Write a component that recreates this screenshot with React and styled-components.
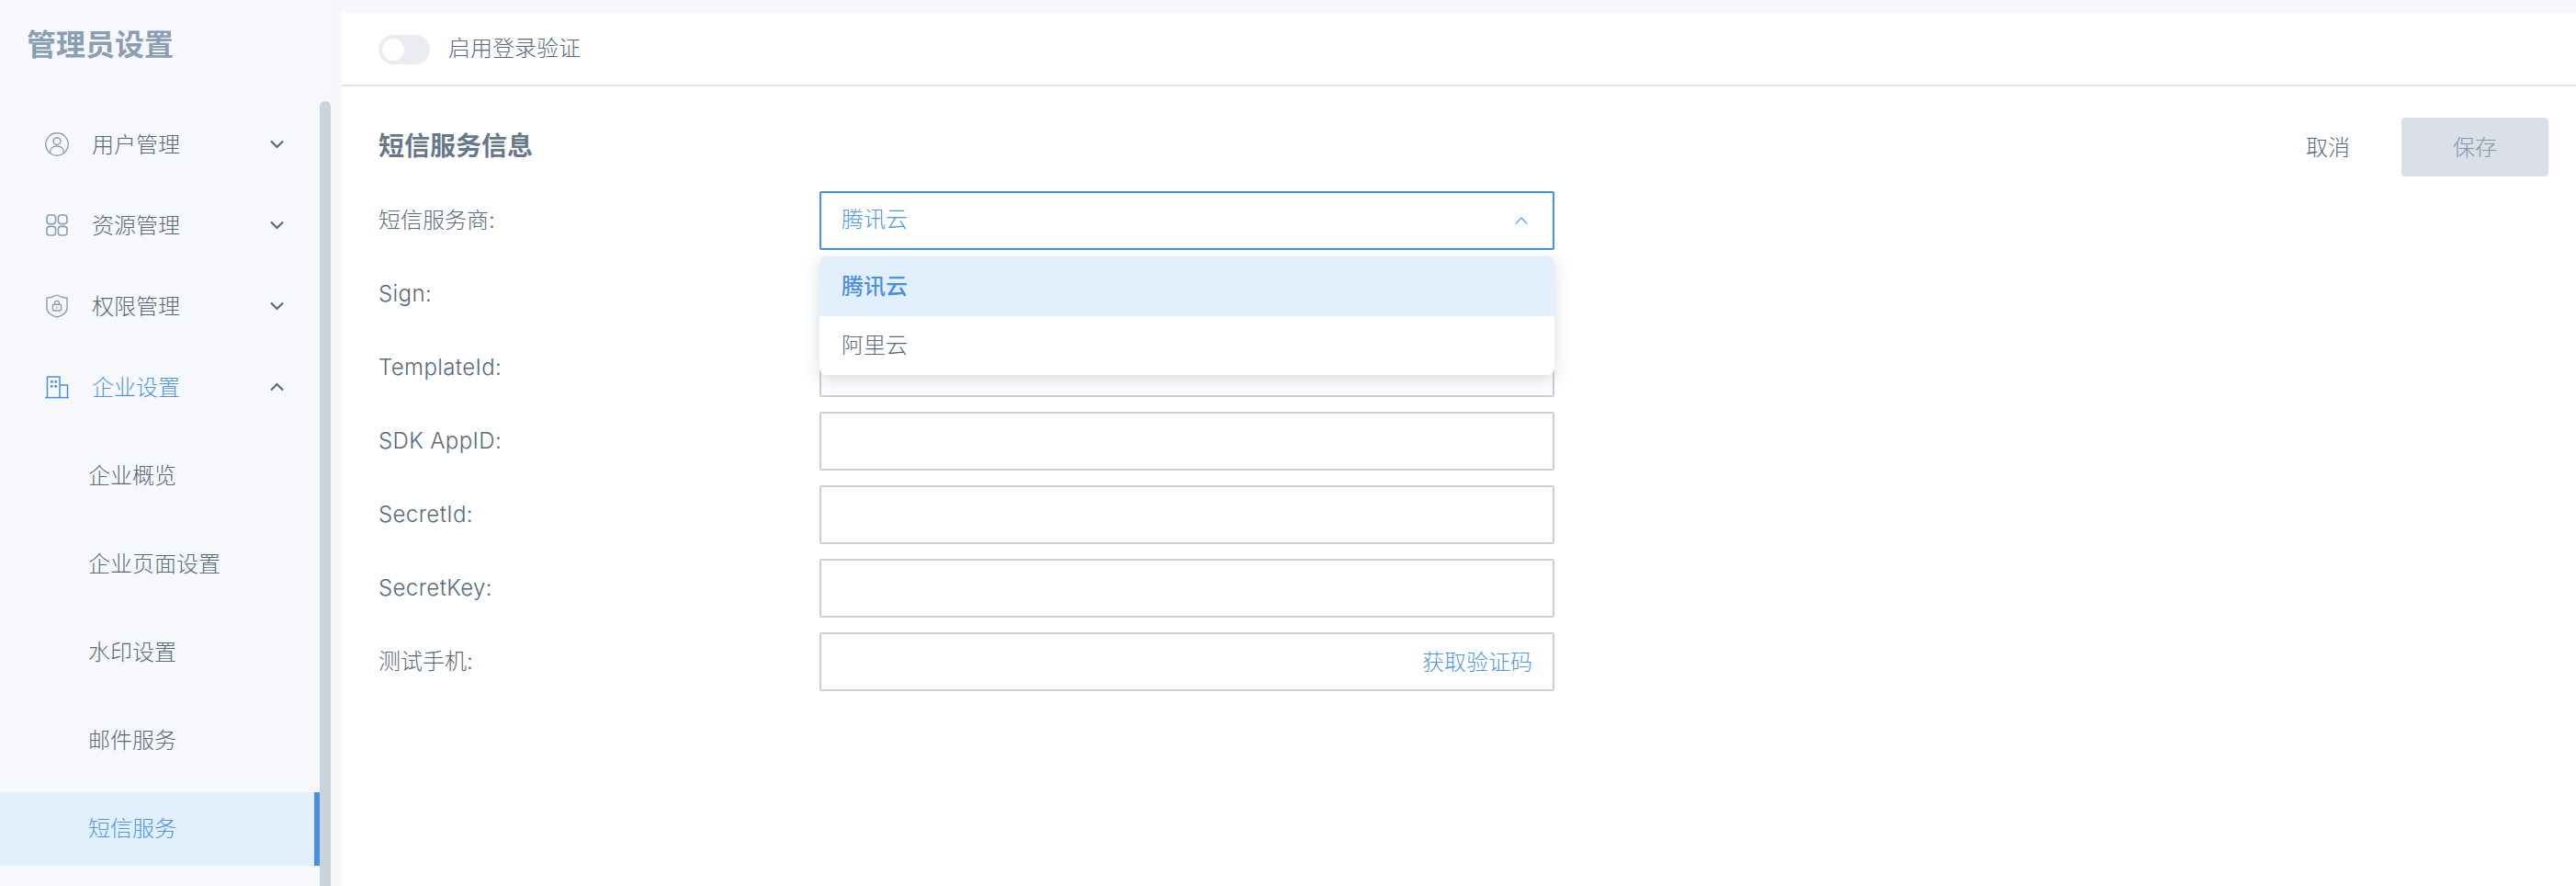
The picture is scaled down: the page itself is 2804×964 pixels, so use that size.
import React from "react";
import styled, { createGlobalStyle } from "styled-components";

const GlobalStyle = createGlobalStyle`
  html, body {
    margin: 0;
    padding: 0;
    height: 100%;
    background: #f5f7fb;
  }
  body {
    font-family: Inter, "Noto Sans CJK SC", "Noto Sans", sans-serif;
    overflow: hidden;
  }
  * {
    box-sizing: border-box;
  }
`;

const Page = styled.div`
  display: flex;
  gap: 12px;
  width: 2804px;
  height: 964px;
  overflow: hidden;
`;

const Sidebar = styled.aside`
  position: relative;
  flex: none;
  width: 360px;
  height: 100%;
  padding-right: 12px;
  background: #f6f8fc;
`;

const Scrollbar = styled.div`
  position: absolute;
  top: 110px;
  right: 0;
  bottom: 0;
  width: 12px;
  border-radius: 6px 6px 0 0;
  background: #cad3dc;
`;

const SideTitle = styled.h1`
  margin: 0 0 17px;
  padding: 2px 0 0 29px;
  font-size: 32px;
  line-height: 94px;
  font-weight: 700;
  color: #8a9eb4;
`;

const MenuItem = styled.div`
  display: flex;
  align-items: center;
  height: 88px;
  padding: 0 39px 0 49px;
  font-size: 24px;
  font-weight: 300;
  color: ${(p) => (p.$active ? "#4f96e6" : "#596a7b")};
`;

const MenuIcon = styled.span`
  display: flex;
  justify-content: center;
  width: 26px;
  margin-right: 25px;
`;

const MenuText = styled.span`
  flex: 1;
  padding-bottom: 4px;
`;

const SubMenu = styled.div`
  display: flex;
  flex-direction: column;
  gap: 16px;
  margin-top: 13px;
`;

const SubItem = styled.div`
  position: relative;
  display: flex;
  align-items: center;
  height: 80px;
  padding: 0 0 6px 96px;
  font-size: 24px;
  font-weight: 300;
  color: ${(p) => (p.$active ? "#4f96e6" : "#596a7b")};
  background: ${(p) => (p.$active ? "#e2f0fe" : "transparent")};
  &::after {
    content: "";
    display: ${(p) => (p.$active ? "block" : "none")};
    position: absolute;
    top: 0;
    right: 0;
    bottom: 0;
    width: 6px;
    background: #4a90e2;
  }
`;

const Main = styled.main`
  flex: 1;
  margin-top: 14px;
  background: #fff;
`;

const TopBar = styled.div`
  display: flex;
  align-items: center;
  gap: 20px;
  padding: 24px 40px 22px;
  border-bottom: 2px solid #dfe3ea;
`;

const Toggle = styled.span`
  display: block;
  width: 56px;
  height: 32px;
  padding: 4px;
  border-radius: 16px;
  background: #e9edf1;
  &::before {
    content: "";
    display: block;
    width: 24px;
    height: 24px;
    border-radius: 50%;
    background: #fff;
  }
`;

const Label = styled.span`
  font-size: 24px;
  font-weight: 300;
  line-height: 32px;
  color: #596a7b;
`;

const TopLabel = styled(Label)`
  line-height: 30px;
  padding-bottom: 2px;
`;

const Content = styled.section`
  padding: 34px 30px 0 40px;
`;

const SectionHead = styled.div`
  display: flex;
  align-items: center;
  height: 64px;
  margin-bottom: 16px;
`;

const SectionTitle = styled.h2`
  flex: 1;
  margin: 0;
  padding-bottom: 6px;
  font-size: 28px;
  font-weight: 700;
  color: #67788a;
`;

const CancelButton = styled.button`
  margin-right: 56px;
  padding: 0 0 3px;
  border: none;
  background: none;
  font: inherit;
  font-size: 24px;
  font-weight: 300;
  color: #596a7b;
`;

const SaveButton = styled.button`
  width: 160px;
  height: 64px;
  padding: 0 0 3px;
  border: none;
  border-radius: 4px;
  background: #dadfe8;
  font: inherit;
  font-size: 24px;
  font-weight: 300;
  color: #8497aa;
`;

const Form = styled.div`
  display: flex;
  flex-direction: column;
  gap: 16px;
`;

const Row = styled.div`
  display: flex;
  align-items: center;
  height: 64px;
`;

const RowLabel = styled(Label)`
  flex: none;
  width: 480px;
  letter-spacing: ${(p) => (p.$latin ? "0.4px" : "0")};
`;

const Field = styled.div`
  position: relative;
  display: flex;
  align-items: center;
  width: 800px;
  height: 64px;
  padding: 0 22px;
  border: 2px solid ${(p) => (p.$focus ? "#4a90e2" : "#c8cedb")};
  border-radius: 2px;
  background: #fff;
  font-size: 24px;
  font-weight: 300;
`;

const FieldInput = styled.input`
  flex: 1;
  min-width: 0;
  height: 100%;
  padding: 0;
  border: none;
  outline: none;
  background: none;
  font: inherit;
`;

const SelectValue = styled.span`
  flex: 1;
  padding-bottom: 8px;
  color: #4f96e6;
`;

const SelectArrow = styled.span`
  display: flex;
  margin-right: 5px;
`;

const SendCode = styled.a`
  padding-bottom: 3px;
  color: #4f96e6;
`;

const Dropdown = styled.ul`
  position: absolute;
  z-index: 2;
  top: 69px;
  left: -2px;
  right: -2px;
  margin: 0;
  padding: 0;
  list-style: none;
  overflow: hidden;
  border-radius: 8px;
  background: #fff;
  box-shadow: 0 6px 18px rgba(40, 60, 90, 0.18);
`;

const Option = styled.li`
  display: flex;
  align-items: center;
  height: 64.5px;
  padding: 0 0 4px 24px;
  font-weight: ${(p) => (p.$selected ? 500 : 300)};
  color: ${(p) => (p.$selected ? "#4a90e2" : "#596a7b")};
  background: ${(p) => (p.$selected ? "#e2f0fe" : "#fff")};
`;

const UserIcon = () => (
  <svg width="26" height="26" viewBox="0 0 26 26" fill="none" stroke="#8a9eb4" strokeWidth="1.4">
    <circle cx="13" cy="13" r="12.2" />
    <circle cx="13" cy="9.6" r="3.9" />
    <path d="M5.6 22.6v-1.4c0-3.6 3-6.2 7.4-6.2s7.4 2.6 7.4 6.2v1.4" />
  </svg>
);

const ResourceIcon = () => (
  <svg width="24" height="24" viewBox="0 0 24 24" fill="none" stroke="#8a9eb4" strokeWidth="1.6">
    <rect x="1" y="1" width="9.6" height="9.6" rx="3" />
    <rect x="13.4" y="1" width="9.6" height="9.6" rx="3" />
    <rect x="1" y="13.4" width="9.6" height="9.6" rx="3" />
    <rect x="13.4" y="13.4" width="9.6" height="9.6" rx="3" />
  </svg>
);

const ShieldIcon = () => (
  <svg width="24" height="26" viewBox="0 0 24 26" fill="none" stroke="#8a9eb4" strokeWidth="1.4">
    <path d="M12 1C9 2.8 5 3.8 1 4.2V15c0 5.2 5.4 8.8 11 10 5.6-1.2 11-4.8 11-10V4.2C19 3.8 15 2.8 12 1z" />
    <rect x="7.4" y="11.2" width="9.2" height="6.8" rx="1.4" />
    <path d="M9.6 11.2V9.8a2.4 2.4 0 0 1 4.8 0v1.4" />
    <path d="M12 13.8v1.6" />
  </svg>
);

const BuildingIcon = () => (
  <svg width="26" height="25" viewBox="0 0 26 25" fill="none" stroke="#4a90e2" strokeWidth="1.5">
    <path d="M2.5 23.5V1h13.5v22.5" />
    <path d="M16 10h8.5v13.5" />
    <path d="M0 23.6h26" />
    <g fill="#4a90e2" stroke="none">
      <rect x="6" y="5" width="2.6" height="2.6" />
      <rect x="10.4" y="5" width="2.6" height="2.6" />
      <rect x="6" y="10" width="2.6" height="2.6" />
      <rect x="10.4" y="10" width="2.6" height="2.6" />
    </g>
  </svg>
);

const Chevron = ({ up }) => (
  <svg width="15" height="10" viewBox="0 0 15 10" fill="none" stroke="#5b6b7b" strokeWidth="2.2">
    <path d={up ? "M1 8.5l6.5-6.5 6.5 6.5" : "M1 1.5l6.5 6.5 6.5-6.5"} />
  </svg>
);

const SmallChevron = () => (
  <svg width="14" height="8" viewBox="0 0 14 8" fill="none" stroke="#5a9ee8" strokeWidth="1.2">
    <path d="M1 7.4l6-6.4 6 6.4" />
  </svg>
);

const menus = [
  { name: "用户管理", icon: <UserIcon /> },
  { name: "资源管理", icon: <ResourceIcon /> },
  { name: "权限管理", icon: <ShieldIcon /> },
  { name: "企业设置", icon: <BuildingIcon />, active: true },
];

const subMenus = ["企业概览", "企业页面设置", "水印设置", "邮件服务", "短信服务"];
const fields = ["Sign:", "TemplateId:", "SDK AppID:", "SecretId:", "SecretKey:"];

const App = () => {
  return (
    <Page>
      <GlobalStyle />
      <Sidebar>
        <SideTitle>管理员设置</SideTitle>
        {menus.map((m) => (
          <MenuItem key={m.name} $active={m.active}>
            <MenuIcon>{m.icon}</MenuIcon>
            <MenuText>{m.name}</MenuText>
            <Chevron up={m.active} />
          </MenuItem>
        ))}
        <SubMenu>
          {subMenus.map((s) => (
            <SubItem key={s} $active={s === "短信服务"}>
              {s}
            </SubItem>
          ))}
        </SubMenu>
        <Scrollbar />
      </Sidebar>
      <Main>
        <TopBar>
          <Toggle />
          <TopLabel>启用登录验证</TopLabel>
        </TopBar>
        <Content>
          <SectionHead>
            <SectionTitle>短信服务信息</SectionTitle>
            <CancelButton>取消</CancelButton>
            <SaveButton>保存</SaveButton>
          </SectionHead>
          <Form>
            <Row>
              <RowLabel>短信服务商:</RowLabel>
              <Field $focus>
                <SelectValue>腾讯云</SelectValue>
                <SelectArrow>
                  <SmallChevron />
                </SelectArrow>
                <Dropdown>
                  <Option $selected>腾讯云</Option>
                  <Option>阿里云</Option>
                </Dropdown>
              </Field>
            </Row>
            {fields.map((f) => (
              <Row key={f}>
                <RowLabel $latin>{f}</RowLabel>
                <Field>
                  <FieldInput />
                </Field>
              </Row>
            ))}
            <Row>
              <RowLabel>测试手机:</RowLabel>
              <Field>
                <FieldInput />
                <SendCode>获取验证码</SendCode>
              </Field>
            </Row>
          </Form>
        </Content>
      </Main>
    </Page>
  );
};

export default App;
